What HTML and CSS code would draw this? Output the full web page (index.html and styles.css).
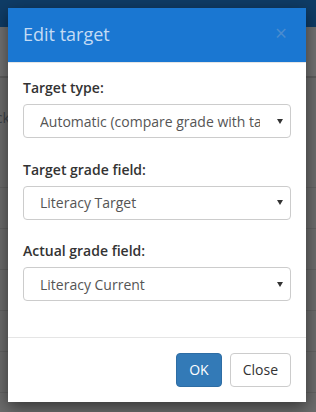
FILE: index.html
```html
<!DOCTYPE html>
<html>
<head>
<meta charset="utf-8">
<link rel="stylesheet" href="styles.css">
</head>
<body>
<div class="page">
  <div class="navbar"></div>
  <div class="band"></div>
  <div class="row txt"><span class="cut">Feedback</span></div>
  <div class="row"></div>
  <div class="row"></div>
  <div class="row"></div>
  <div class="row"></div>
  <div class="row"></div>
</div>

<div class="modal">
  <div class="modal-header">
    <h4 class="modal-title">Edit target</h4>
    <span class="close">&times;</span>
  </div>
  <div class="modal-body">
    <div class="form-group">
      <div class="label">Target type:</div>
      <div class="select"><span class="val">Automatic (compare grade with target)</span><span class="arrow"></span></div>
    </div>
    <div class="form-group">
      <div class="label">Target grade field:</div>
      <div class="select"><span class="val">Literacy Target</span><span class="arrow"></span></div>
    </div>
    <div class="form-group">
      <div class="label">Actual grade field:</div>
      <div class="select"><span class="val">Literacy Current</span><span class="arrow"></span></div>
    </div>
  </div>
  <div class="modal-footer">
    <button class="btn btn-primary">OK</button>
    <button class="btn btn-default">Close</button>
  </div>
</div>
</body>
</html>
```

FILE: styles.css
```css
* { box-sizing: border-box; }
html, body { margin: 0; padding: 0; }
body {
  width: 316px;
  height: 412px;
  overflow: hidden;
  background: #6c6c6c;
  font-family: "Open Sans", "Liberation Sans", sans-serif;
  font-size: 14px;
  color: #333;
  position: relative;
}
.page { display: flex; flex-direction: column; }
.navbar { height: 27px; background: #0f3c66; }
.band { height: 51px; background: #717171; border-bottom: 2px solid #5d5d5d; }
.row { height: 41px; border-bottom: 1px solid #626262; }
.row.txt { height: 110px; display: flex; align-items: center; }
.cut { margin-left: -52px; color: #3b4148; font-size: 14px; margin-top: -30px; }

.modal {
  position: absolute;
  top: 8px;
  left: 8px;
  width: 298px;
  background: #fff;
  box-shadow: 0 5px 15px rgba(0,0,0,.5);
}
.modal-header {
  height: 55px;
  background: #1a77d2;
  border-bottom: 1px solid #e5e5e5;
  display: flex;
  align-items: center;
  justify-content: space-between;
  padding: 0 15px;
}
.modal-title {
  margin: 0;
  font-size: 18px;
  font-weight: 400;
  color: #c4dbf4;
  line-height: 1.2;
}
.close {
  font-size: 21px;
  color: #4b8ccf;
  line-height: 1;
  margin-top: -4px;
  margin-right: 4px;
}
.modal-body { padding: 15px; }
.form-group { margin-bottom: 21.5px; }
.form-group:last-child { margin-bottom: 0; }
.label {
  font-weight: 600;
  line-height: 20px;
  margin-bottom: 6px;
  color: #333;
}
.select {
  height: 34px;
  border: 1px solid #ccc;
  border-radius: 4px;
  display: flex;
  align-items: center;
  padding-left: 16px;
  color: #555;
}
.val {
  flex: 1;
  overflow: hidden;
  white-space: nowrap;
}
.arrow {
  width: 30px;
  flex: none;
  display: flex;
  justify-content: flex-end;
  padding-right: 7px;
}
.arrow::before {
  content: "";
  width: 0; height: 0;
  border-left: 3px solid transparent;
  border-right: 3px solid transparent;
  border-top: 5px solid #333;
}
.modal-footer {
  border-top: 1px solid #e5e5e5;
  padding: 15px;
  display: flex;
  justify-content: flex-end;
  gap: 8px;
  margin-top: 21px;
}
.btn {
  font-family: inherit;
  font-size: 14px;
  line-height: 20px;
  height: 34px;
  padding: 6px 12px;
  border-radius: 4px;
  border: 1px solid transparent;
  margin: 0;
}
.btn-primary { background: #337ab7; border-color: #2e6da4; color: #fff; }
.btn-default { background: #fff; border-color: #ccc; color: #333; }
```
